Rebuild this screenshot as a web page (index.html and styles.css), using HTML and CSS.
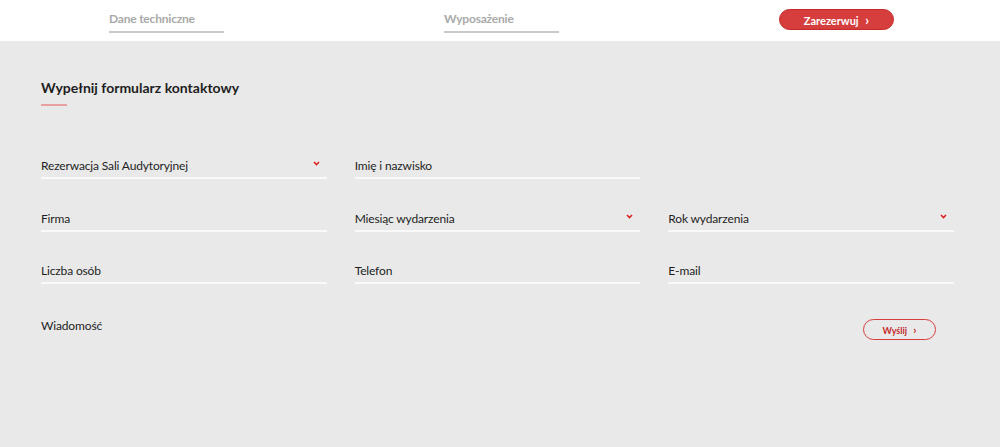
FILE: index.html
```html
<!DOCTYPE html>
<html lang="pl">
<head>
  <meta charset="UTF-8" />
  <title>Formularz kontaktowy</title>
  <link rel="stylesheet" href="styles.css">
</head>

<body>

  <div id="pasek">
    <a class="zakladka" href="#">Dane techniczne</a>
    <a class="zakladka" href="#">Wyposażenie</a>
    <button class="rezerwuj">Zarezerwuj <span class="strzalka">›</span></button>
  </div>

  <div id="formularz">
    <h2>Wypełnij formularz kontaktowy</h2>
    <div class="kreska"></div>

    <div class="pola">
      <div class="pole wybor">Rezerwacja Sali Audytoryjnej
        <svg class="chevron" width="7" height="5" viewBox="0 0 7 5"><polyline points="1,1 3.5,3.5 6,1" fill="none" stroke="#e0201f" stroke-width="1.6"/></svg>
      </div>
      <div class="pole">Imię i nazwisko</div>
      <div class="puste"></div>

      <div class="pole">Firma</div>
      <div class="pole wybor">Miesiąc wydarzenia
        <svg class="chevron" width="7" height="5" viewBox="0 0 7 5"><polyline points="1,1 3.5,3.5 6,1" fill="none" stroke="#e0201f" stroke-width="1.6"/></svg>
      </div>
      <div class="pole wybor">Rok wydarzenia
        <svg class="chevron" width="7" height="5" viewBox="0 0 7 5"><polyline points="1,1 3.5,3.5 6,1" fill="none" stroke="#e0201f" stroke-width="1.6"/></svg>
      </div>

      <div class="pole">Liczba osób</div>
      <div class="pole">Telefon</div>
      <div class="pole">E-mail</div>

      <div class="wiadomosc">Wiadomość</div>
      <button class="wyslij">Wyślij <span class="strzalka">›</span></button>
    </div>
  </div>

</body>
</html>
```

FILE: styles.css
```css
body {
  font-family: Lato, 'Liberation Sans', sans-serif;
  margin: 0;
  background: #e9e9e9;
  color: #1e1e1e;
}

#pasek {
  background: #ffffff;
  height: 41px;
  display: flex;
  align-items: flex-start;
  padding-left: 109px;
  gap: 220px;
}

.zakladka {
  width: 115px;
  box-sizing: border-box;
  padding-top: 11px;
  height: 33px;
  font-size: 12px;
  font-weight: bold;
  line-height: 16px;
  letter-spacing: -0.2px;
  color: #a9a9a9;
  text-decoration: none;
  border-bottom: 2px solid #c9c9c9;
}

.rezerwuj {
  margin-top: 9px;
  width: 115px;
  height: 21px;
  padding: 0;
  background: #d63e3e;
  border: 1px solid #c52a2a;
  border-radius: 11px;
  color: #ffffff;
  font-family: inherit;
  font-size: 11px;
  font-weight: bold;
  cursor: pointer;
}

.strzalka {
  margin-left: 4px;
  font-size: 13px;
}

#formularz {
  padding: 38px 46px 0 41px;
}

h2 {
  margin: 0;
  font-size: 14px;
  line-height: 18px;
}

.kreska {
  width: 26px;
  height: 2px;
  margin-top: 7px;
  background: #e8a0a0;
}

.pola {
  margin-top: 47px;
  display: grid;
  grid-template-columns: repeat(3, 1fr);
  column-gap: 28px;
  row-gap: 26.5px;
}

.pole {
  position: relative;
  height: 24px;
  line-height: 26px;
  font-size: 12px;
  letter-spacing: -0.15px;
  border-bottom: 2px solid #f9f9f9;
}

.chevron {
  position: absolute;
  right: 7px;
  top: 8px;
}

.wiadomosc {
  grid-column: 1 / 3;
  height: 24px;
  line-height: 24px;
  font-size: 12px;
  letter-spacing: -0.15px;
  padding-top: 3px;
}

.wyslij {
  justify-self: end;
  margin-right: 18px;
  margin-top: 8px;
  width: 73px;
  height: 21px;
  padding: 0;
  background: transparent;
  border: 1px solid #d63e3e;
  border-radius: 11px;
  color: #c42a2a;
  font-family: inherit;
  font-size: 9px;
  font-weight: bold;
  cursor: pointer;
}

.wyslij .strzalka {
  font-size: 11px;
}
```
